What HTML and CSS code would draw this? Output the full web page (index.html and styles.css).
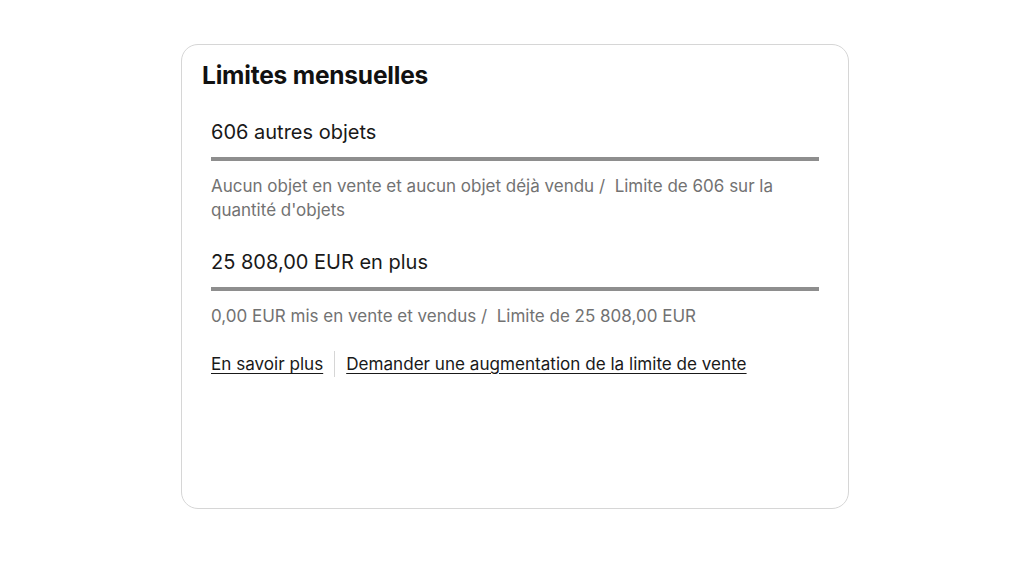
FILE: index.html
```html
<!DOCTYPE html>
<html lang="fr">
<head>
<meta charset="utf-8">
<link rel="stylesheet" href="styles.css">
</head>
<body>
<div class="page">
  <section class="card">
    <h2 class="card-title">Limites mensuelles</h2>
    <div class="limits">
      <div class="limit">
        <div class="limit-value">606 autres objets</div>
        <div class="limit-bar"></div>
        <p class="limit-desc">Aucun objet en vente et aucun objet déjà vendu /&nbsp; Limite de 606 sur la quantité d'objets</p>
      </div>
      <div class="limit">
        <div class="limit-value">25 808,00 EUR en plus</div>
        <div class="limit-bar"></div>
        <p class="limit-desc">0,00 EUR mis en vente et vendus /&nbsp; Limite de 25 808,00 EUR</p>
      </div>
      <div class="links">
        <a href="#" class="link">En savoir plus</a>
        <span class="sep"></span>
        <a href="#" class="link">Demander une augmentation de la limite de vente</a>
      </div>
    </div>
  </section>
</div>
</body>
</html>
```
FILE: styles.css
```css
html, body {
  margin: 0;
  padding: 0;
  background: #ffffff;
}
body {
  font-family: Inter, "Noto Sans", Arial, sans-serif;
  color: #191919;
}
.page {
  padding: 44px 0 0 181px;
}
.card {
  box-sizing: border-box;
  width: 668px;
  height: 465px;
  border: 1.5px solid #d6d6d6;
  border-radius: 17px;
  padding: 15px 29px 0 20px;
}
.card-title {
  margin: 0;
  font-size: 24.5px;
  line-height: 30px;
  font-weight: 700;
  letter-spacing: -0.2px;
  color: #111111;
}
.limits {
  padding-left: 9px;
  margin-top: 29px;
}
.limit-value {
  font-size: 20px;
  line-height: 26px;
}
.limit-bar {
  height: 4px;
  background: #8e8e8e;
  margin-top: 12px;
}
.limit-desc {
  margin: 13px 0 0;
  font-size: 17px;
  line-height: 24px;
  color: #727272;
}
.limit + .limit {
  margin-top: 27px;
}
.links {
  display: flex;
  align-items: center;
  gap: 11px;
  margin-top: 23px;
}
.link {
  font-size: 17.1px;
  line-height: 24px;
  color: #191919;
  text-decoration: underline;
  text-underline-offset: 3px;
}
.sep {
  width: 1px;
  height: 26px;
  background: #d6d6d6;
}
```
